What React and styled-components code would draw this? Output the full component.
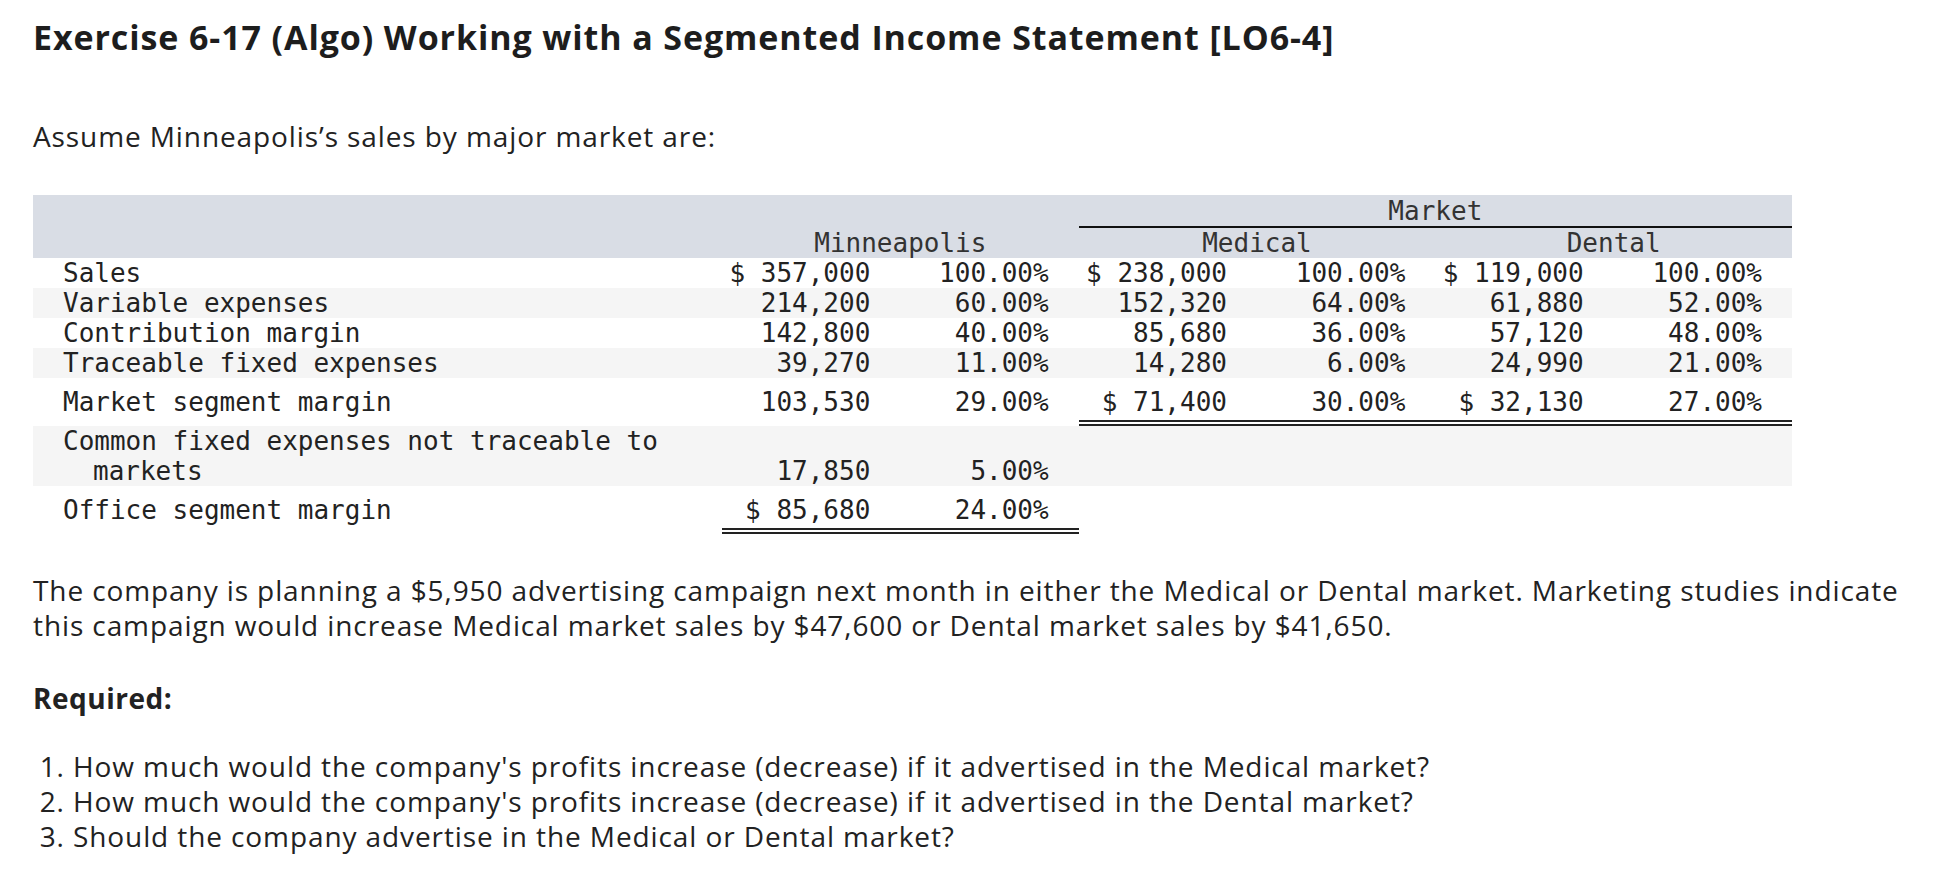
import React from 'react';
import styled, { createGlobalStyle } from 'styled-components';

const GlobalStyle = createGlobalStyle`
  body {
    margin: 0;
    background: #ffffff;
    color: #222222;
    font-family: "Open Sans", Lato, Arial, sans-serif;
  }
`;

const Page = styled.div`
  padding: 15px 0 0 33px;
`;

const Title = styled.h1`
  margin: 0;
  font-size: 34px;
  line-height: 44px;
  font-weight: 700;
  letter-spacing: 0.9px;
  color: #1d1d1d;
`;

const Intro = styled.p`
  margin: 60px 0 0;
  font-size: 28px;
  line-height: 35px;
  letter-spacing: 0.9px;
`;

const Table = styled.table`
  margin-top: 41px;
  width: 1759px;
  table-layout: fixed;
  border-collapse: separate;
  border-spacing: 0;
  font-family: "DejaVu Sans Mono", "Liberation Mono", monospace;
  font-size: 26px;
  line-height: 30px;
  color: #222222;
`;

const Head = styled.thead`
  background: #d9dde5;
`;

const HeadCell = styled.th`
  padding: 0;
  font-weight: 400;
  text-align: center;
  color: #333333;
  border-bottom: ${(p) => (p.$rule ? '2px solid #111111' : 'none')};
  padding-top: ${(p) => (p.$top ? '1px' : '0')};
`;

const Row = styled.tr`
  background: ${(p) => (p.$shade ? '#f5f5f5' : 'transparent')};
`;

const LabelCell = styled.td`
  padding: ${(p) => (p.$total ? '9px 10px 9px 60px' : '0 10px 0 60px')};
  text-indent: -30px;
  vertical-align: top;
  white-space: normal;
`;

const NumCell = styled.td`
  padding: ${(p) => (p.$total ? '9px 30px 3px 0' : '0 30px 0 0')};
  text-align: right;
  white-space: nowrap;
  vertical-align: ${(p) => p.$align || 'top'};
  border-bottom: ${(p) =>
    p.$total ? `6px double ${p.$rule ? '#222222' : 'transparent'}` : 'none'};
`;

const Para = styled.p`
  margin: 39px 0 0;
  font-size: 28px;
  line-height: 34.6px;
  letter-spacing: 0.9px;
  width: 1890px;
`;

const Required = styled.p`
  margin: 39px 0 0;
  font-size: 28px;
  line-height: 35px;
  font-weight: 700;
  letter-spacing: 0.5px;
`;

const List = styled.ol`
  margin: 33px 0 0;
  padding-left: 40px;
  font-size: 28px;
  line-height: 35px;
  letter-spacing: 0.9px;
`;

const rows = [
  { label: 'Sales', vals: ['$ 357,000', '100.00%', '$ 238,000', '100.00%', '$ 119,000', '100.00%'] },
  { label: 'Variable expenses', shade: true, vals: ['214,200', '60.00%', '152,320', '64.00%', '61,880', '52.00%'] },
  { label: 'Contribution margin', vals: ['142,800', '40.00%', '85,680', '36.00%', '57,120', '48.00%'] },
  { label: 'Traceable fixed expenses', shade: true, vals: ['39,270', '11.00%', '14,280', '6.00%', '24,990', '21.00%'] },
  { label: 'Market segment margin', total: true, rules: [false, false, true, true, true, true], vals: ['103,530', '29.00%', '$ 71,400', '30.00%', '$ 32,130', '27.00%'] },
  { label: 'Common fixed expenses not traceable to markets', shade: true, align: 'bottom', vals: ['17,850', '5.00%', '', '', '', ''] },
  { label: 'Office segment margin', total: true, rules: [true, true, false, false, false, false], vals: ['$ 85,680', '24.00%', '', '', '', ''] },
];

function App() {
  return (
    <Page>
      <GlobalStyle />
      <Title>Exercise 6-17 (Algo) Working with a Segmented Income Statement [LO6-4]</Title>
      <Intro>Assume Minneapolis’s sales by major market are:</Intro>

      <Table>
        <colgroup>
          <col style={{ width: 689 }} />
          <col />
          <col />
          <col />
          <col />
          <col />
          <col />
        </colgroup>
        <Head>
          <tr>
            <HeadCell $top />
            <HeadCell $top colSpan={2} />
            <HeadCell $top $rule colSpan={4}>Market</HeadCell>
          </tr>
          <tr>
            <HeadCell />
            <HeadCell colSpan={2}>Minneapolis</HeadCell>
            <HeadCell colSpan={2}>Medical</HeadCell>
            <HeadCell colSpan={2}>Dental</HeadCell>
          </tr>
        </Head>
        <tbody>
          {rows.map((row) => (
            <Row key={row.label} $shade={row.shade}>
              <LabelCell $total={row.total}>{row.label}</LabelCell>
              {row.vals.map((v, i) => (
                <NumCell
                  key={i}
                  $total={row.total}
                  $rule={row.rules && row.rules[i]}
                  $align={row.align}
                >
                  {v}
                </NumCell>
              ))}
            </Row>
          ))}
        </tbody>
      </Table>

      <Para>
        The company is planning a $5,950 advertising campaign next month in either the Medical or Dental market. Marketing studies indicate this campaign would increase Medical market sales by $47,600 or Dental market sales by $41,650.
      </Para>

      <Required>Required:</Required>

      <List>
        <li>How much would the company's profits increase (decrease) if it advertised in the Medical market?</li>
        <li>How much would the company's profits increase (decrease) if it advertised in the Dental market?</li>
        <li>Should the company advertise in the Medical or Dental market?</li>
      </List>
    </Page>
  );
}

export default App;
